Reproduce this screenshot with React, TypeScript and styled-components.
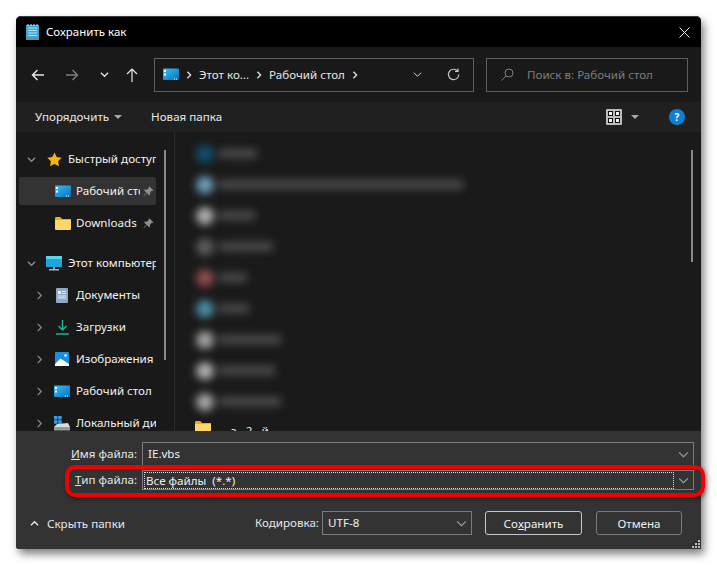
import React from "react";
import styled, { createGlobalStyle } from "styled-components";

const Global = createGlobalStyle`
  html, body { margin: 0; padding: 0; background: #fff; }
  body { font-family: "Noto Sans", "Open Sans", sans-serif; font-size: 11.6px; color: #fff; }
  #root { width: 717px; height: 565px; overflow: hidden; }
`;

const Page = styled.div`
  width: 717px;
  height: 565px;
  padding: 16px;
  box-sizing: border-box;
  background: #fff;
`;
const Win = styled.div`
  position: relative;
  width: 685px;
  height: 533px;
  display: flex;
  flex-direction: column;
  background: #191919;
  border-radius: 5px 5px 0 3px;
  box-shadow: 3px 5px 8px rgba(0, 0, 0, 0.5);
`;
const TitleBar = styled.div`
  height: 31px;
  flex: none;
  background: #000;
  border-top: 1px solid #3c3c3c;
  border-radius: 5px 5px 0 0;
  display: flex;
  align-items: center;
  padding: 0 11px 0 10px;
  gap: 7px;
  box-sizing: border-box;
`;
const Title = styled.span`
  flex: 1;
  font-size: 11.5px;
  line-height: 16px;
`;
const NavBar = styled.div`
  height: 55px;
  flex: none;
  background: #191919;
  display: flex;
  align-items: center;
  padding: 0 13px;
  box-sizing: border-box;
`;
const NavBtn = styled.div<{ $w: number; $dim?: boolean; $ml?: number }>`
  width: ${(p) => p.$w}px;
  margin-left: ${(p) => p.$ml ?? 0}px;
  display: flex;
  justify-content: center;
  color: ${(p) => (p.$dim ? "#7d7d7d" : "#e8e8e8")};
`;
const DropChev = styled(NavBtn)`
  margin-right: 6px;
`;
const Field = styled.div<{ $w: number }>`
  width: ${(p) => p.$w}px;
  height: 34px;
  box-sizing: border-box;
  border: 1px solid #5e5e5e;
  display: flex;
  align-items: center;
  flex: none;
`;
const Address = styled(Field)`
  margin-left: 3px;
  padding-left: 8px;
  gap: 6px;
`;
const Crumb = styled.span`
  color: #e6e6e6;
  line-height: 16px;
`;
const CrumbChev = styled.span`
  color: #e6e6e6;
  display: flex;
`;
const Push = styled.div`
  flex: 1;
`;
const Search = styled(Field)`
  margin-left: 12px;
  padding-left: 14px;
  gap: 13px;
  color: #7e7e7e;
`;
const CommandBar = styled.div`
  height: 30px;
  flex: none;
  background: #202020;
  display: flex;
  align-items: center;
  padding: 0 16px 0 19px;
  box-sizing: border-box;
`;
const Cmd = styled.span`
  color: #e8e8e8;
  line-height: 16px;
`;
const Caret = styled.span`
  width: 0;
  height: 0;
  border-left: 4px solid transparent;
  border-right: 4px solid transparent;
  border-top: 4px solid #a8a8a8;
  display: inline-block;
`;
const CaretGap = styled(Caret)`
  margin: 0 29px 0 5px;
`;
const ViewCaret = styled(Caret)`
  margin: 0 30px 0 9px;
`;
const Help = styled.div`
  width: 16px;
  height: 16px;
  border-radius: 50%;
  background: #0f7fd6;
  color: #fff;
  font-weight: 700;
  font-size: 10px;
  text-align: center;
  line-height: 16px;
`;
const Main = styled.div`
  flex: 1;
  min-height: 0;
  display: flex;
  overflow: hidden;
  background: #191919;
`;
const Side = styled.div`
  position: relative;
  width: 159px;
  flex: none;
  padding: 13px 0 0 3px;
  box-sizing: border-box;
  border-right: 1px solid #2c2c2c;
  overflow: hidden;
`;
const SideScroll = styled.div`
  position: absolute;
  left: 148px;
  top: 18px;
  width: 2px;
  height: 210px;
  background: #8a8a8a;
`;
const Row = styled.div<{ $sel?: boolean; $level?: number; $gapTop?: number }>`
  width: 137px;
  height: 28px;
  margin-top: ${(p) => p.$gapTop ?? 4}px;
  background: ${(p) => (p.$sel ? "#333" : "transparent")};
  border-radius: 2px;
  display: flex;
  align-items: center;
  box-sizing: border-box;
  padding-left: ${(p) => p.$level ?? 5}px;
  white-space: nowrap;
  overflow: hidden;
  flex: none;
`;
const Chev = styled.span`
  width: 14px;
  flex: none;
  display: flex;
  justify-content: center;
  color: #8c8c8c;
`;
const IconBox = styled.span<{ $w: number; $ml: number }>`
  width: ${(p) => p.$w}px;
  margin-left: ${(p) => p.$ml}px;
  flex: none;
  display: flex;
  justify-content: center;
`;
const RowText = styled.span<{ $w: number; $ml?: number }>`
  display: block;
  width: ${(p) => p.$w}px;
  margin-left: ${(p) => p.$ml ?? 5}px;
  overflow: hidden;
  color: #f2f2f2;
  line-height: 16px;
  flex: none;
`;
const Pin = styled.span`
  flex: none;
  display: flex;
  margin-left: 3px;
`;
const ListPane = styled.div`
  position: relative;
  flex: 1;
  background: #1a1a1a;
  overflow: hidden;
  padding: 6px 0 0 20px;
  box-sizing: border-box;
`;
const BlurRow = styled.div`
  height: 31px;
  display: flex;
  align-items: center;
  gap: 5px;
  filter: blur(4px);
`;
const BlurIcon = styled.div<{ $c: string }>`
  width: 18px;
  height: 18px;
  margin-left: 1px;
  border-radius: 50%;
  background: ${(p) => p.$c};
  flex: none;
`;
const BlurText = styled.div<{ $w: number }>`
  width: ${(p) => p.$w}px;
  height: 9px;
  background: #4c4c4c;
`;
const FolderRow = styled.div`
  height: 16px;
  margin-top: 4px;
  display: flex;
  align-items: flex-start;
  gap: 20px;
`;
const ClippedName = styled.span`
  color: #eee;
  line-height: 16px;
  margin-top: 2px;
  letter-spacing: 3px;
`;
const ListScroll = styled.div`
  position: absolute;
  left: 516px;
  top: 18px;
  width: 2px;
  height: 112px;
  background: #8a8a8a;
`;
const Bottom = styled.div`
  height: 118px;
  flex: none;
  background: #333;
  padding: 11px 7px 0 0;
  box-sizing: border-box;
  display: flex;
  flex-direction: column;
  border-radius: 0 0 0 3px;
`;
const FormRow = styled.div<{ $mt?: number }>`
  display: flex;
  align-items: center;
  margin-top: ${(p) => p.$mt ?? 0}px;
`;
const Label = styled.label`
  width: 126px;
  flex: none;
  text-align: right;
  padding-right: 5px;
  box-sizing: border-box;
  color: #e6e6e6;
  line-height: 16px;
`;
const Combo = styled.div<{ $h: number }>`
  flex: 1;
  height: ${(p) => p.$h}px;
  border: 1px solid #7b7b7b;
  display: flex;
  align-items: center;
  box-sizing: border-box;
  padding-left: 5px;
  color: #f0f0f0;
`;
const ComboText = styled.span`
  flex: 1;
  line-height: 16px;
`;
const FocusBox = styled.div`
  flex: 1;
  height: 17px;
  margin-left: -4px;
  border: 1px dotted #dcdcdc;
  box-sizing: border-box;
  padding-left: 1px;
  line-height: 15px;
  color: #f0f0f0;
`;
const ComboCaret = styled.span`
  width: 19px;
  flex: none;
  display: flex;
  justify-content: center;
  color: #a0a0a0;
`;
const FootRow = styled.div`
  display: flex;
  align-items: center;
  margin-top: 21px;
  padding-left: 14px;
`;
const HideBtn = styled.div`
  display: flex;
  align-items: center;
  gap: 8px;
  color: #e6e6e6;
  width: 225px;
  flex: none;
`;
const EncLabel = styled.span`
  width: 67px;
  flex: none;
  color: #e6e6e6;
  line-height: 16px;
`;
const EncCombo = styled(Combo)`
  flex: none;
  width: 150px;
`;
const Btn = styled.div<{ $w: number; $def?: boolean; $ml: number }>`
  width: ${(p) => p.$w}px;
  margin-left: ${(p) => p.$ml}px;
  height: 24px;
  box-sizing: border-box;
  border: 1px solid ${(p) => (p.$def ? "#c8c8c8" : "#7b7b7b")};
  border-radius: 3px;
  display: flex;
  align-items: center;
  justify-content: center;
  color: #f0f0f0;
  flex: none;
`;
const Highlight = styled.div`
  position: absolute;
  left: 49px;
  top: 449px;
  width: 640px;
  height: 32px;
  border: 4px solid #f00000;
  border-radius: 10px;
  box-sizing: border-box;
  box-shadow: 1px 2px 4px rgba(0, 0, 0, 0.5);
  pointer-events: none;
`;
const Grip = styled.svg`
  position: absolute;
  right: 1px;
  bottom: 1px;
`;
const U = styled.span`
  text-decoration: underline;
`;

const Chevron = ({ dir = "down", size = 9, w = 1.4 }: { dir?: "down" | "right" | "up"; size?: number; w?: number }) => {
  const d = dir === "down" ? "M1 3l4 4 4-4" : dir === "up" ? "M1 7l4-4 4 4" : "M3 1l4 4-4 4";
  return (
    <svg width={size} height={size} viewBox="0 0 10 10" fill="none" stroke="currentColor" strokeWidth={w}>
      <path d={d} />
    </svg>
  );
};
const DesktopIcon = ({ w = 16, h = 13 }: { w?: number; h?: number }) => (
  <svg width={w} height={h} viewBox="0 0 16 12">
    <defs>
      <linearGradient id="dk" x1="0" y1="0" x2="1" y2="1">
        <stop offset="0" stopColor="#35c2ee" />
        <stop offset="1" stopColor="#0a6fc0" />
      </linearGradient>
    </defs>
    <rect width="16" height="11.5" rx="1" fill="url(#dk)" />
    <rect x="1" y="1.5" width="2" height="2" fill="#fff" />
    <rect x="1" y="5" width="2" height="2" fill="#fff" />
    <rect x="11" y="10" width="1" height="1" fill="#fff" />
    <rect x="13" y="10" width="1" height="1" fill="#fff" />
  </svg>
);
const PinIcon = () => (
  <svg width="11" height="11" viewBox="0 0 11 11">
    <path d="M6.5.5l4 4-1 .6-.8-.3L6.8 7l.2 1.800-.8.7-2.300-2.400L1 10 .6 9.600l2.900-2.900L1.100 4.400l.7-.8 1.800.2 2.200-1.900-.2-.8z" fill="#8d8d8d" />
  </svg>
);
const Folder = () => (
  <svg width="16" height="13" viewBox="0 0 16 13">
    <path d="M0 1.500C0 .7.500 0 1.200 0h4l2 2H16v2H0z" fill="#f0aa14" />
    <path d="M0 3h16v9a1 1 0 0 1-1 1H1a1 1 0 0 1-1-1z" fill="#ffd768" />
  </svg>
);
const Row2 = ({ icon, w, ml, text, tw, tml }: { icon: React.ReactNode; w: number; ml: number; text: string; tw: number; tml?: number }) => (
  <Row $level={13}>
    <Chev><Chevron dir="right" /></Chev>
    <IconBox $w={w} $ml={ml}>{icon}</IconBox>
    <RowText $w={tw} $ml={tml}>{text}</RowText>
  </Row>
);

const blurred: [string, number][] = [
  ["#12506e", 38],
  ["#6d9fba", 244],
  ["#b0b0b0", 36],
  ["#5c5c5c", 54],
  ["#8e4d4a", 28],
  ["#4f8ea8", 30],
  ["#a3a3a3", 62],
  ["#b0b0b0", 56],
  ["#a6a6a6", 62],
];

export default function App() {
  return (
    <Page>
      <Global />
      <Win>
        <TitleBar>
          <svg width="13" height="16" viewBox="0 0 13 16">
            <rect y="1" width="13" height="14" fill="#35a6d8" />
            <rect y="14.500" width="13" height="1.500" fill="#c9713a" />
            <path d="M2 4h9M2 6.500h9M2 9h9M2 11.500h9" stroke="#bfe6f6" strokeWidth="1" />
            <path d="M2 0v2M5 0v2M8 0v2M11 0v2" stroke="#d8eef8" strokeWidth="1" />
          </svg>
          <Title>Сохранить как</Title>
          <svg width="11" height="11" viewBox="0 0 11 11" stroke="#f0f0f0" strokeWidth="1" fill="none">
            <path d="M.5.500l10 10M10.500.500l-10 10" />
          </svg>
        </TitleBar>
        <NavBar>
          <NavBtn $w={18}>
            <svg width="14" height="12" viewBox="0 0 14 12" fill="none" stroke="currentColor" strokeWidth="1.400"><path d="M13 6H1.500M6.500 1l-5 5 5 5" /></svg>
          </NavBtn>
          <NavBtn $w={18} $ml={16} $dim>
            <svg width="14" height="12" viewBox="0 0 14 12" fill="none" stroke="currentColor" strokeWidth="1.400"><path d="M1 6h11.500M7.500 1l5 5-5 5" /></svg>
          </NavBtn>
          <NavBtn $w={18} $ml={14}><Chevron /></NavBtn>
          <NavBtn $w={38}>
            <svg width="12" height="14" viewBox="0 0 12 14" fill="none" stroke="currentColor" strokeWidth="1.200"><path d="M6 14V1M1 6l5-5 5 5" /></svg>
          </NavBtn>
          <Address $w={320}>
            <DesktopIcon />
            <CrumbChev><Chevron dir="right" size={8} w={1.6} /></CrumbChev>
            <Crumb>Этот ко...</Crumb>
            <CrumbChev><Chevron dir="right" size={8} w={1.6} /></CrumbChev>
            <Crumb>Рабочий стол</Crumb>
            <CrumbChev><Chevron dir="right" size={8} w={1.6} /></CrumbChev>
            <Push />
            <DropChev $w={9}><Chevron size={9} w={1} /></DropChev>
            <NavBtn $w={39}>
              <svg width="13" height="13" viewBox="0 0 13 13" fill="none" stroke="#c8c8c8" strokeWidth="1.200"><path d="M10.500 3A5.200 5.200 0 1 0 11.800 6.500M11 .5v3H8" /></svg>
            </NavBtn>
          </Address>
          <Search $w={202}>
            <svg width="13" height="13" viewBox="0 0 13 13" fill="none" stroke="#7e7e7e" strokeWidth="1"><circle cx="8" cy="5" r="4" /><path d="M5 8l-4.500 4.500" /></svg>
            <span>Поиск в: Рабочий стол</span>
          </Search>
        </NavBar>
        <CommandBar>
          <Cmd>Упорядочить</Cmd>
          <CaretGap />
          <Cmd>Новая папка</Cmd>
          <Push />
          <svg width="16" height="16" viewBox="0 0 16 16">
            <rect width="16" height="16" rx="1" fill="#bdbdbd" />
            <rect x="2.500" y="2.500" width="4" height="4" fill="#f2f2f2" stroke="#111" />
            <rect x="9.500" y="2.500" width="4" height="4" fill="#f2f2f2" stroke="#111" />
            <rect x="2.500" y="9.500" width="4" height="4" fill="#f2f2f2" stroke="#111" />
            <rect x="9.500" y="9.500" width="4" height="4" fill="#f2f2f2" stroke="#111" />
          </svg>
          <ViewCaret />
          <Help>?</Help>
        </CommandBar>
        <Main>
          <Side>
            <Row $gapTop={0}>
              <Chev><Chevron /></Chev>
              <IconBox $w={16} $ml={8}>
                <svg width="15" height="15" viewBox="0 0 15 15"><path d="M7.500.500l2.200 4.600 5 .7-3.600 3.500.9 5-4.500-2.400L3 14.300l.9-5L.300 5.800l5-.7z" fill="#f5b50f" /></svg>
              </IconBox>
              <RowText $w={88} $ml={6}>Быстрый доступ</RowText>
            </Row>
            <Row $sel $level={36}>
              <DesktopIcon />
              <RowText $w={64}>Рабочий стол</RowText>
              <Pin><PinIcon /></Pin>
            </Row>
            <Row $level={36}>
              <Folder />
              <RowText $w={64}>Downloads</RowText>
              <Pin><PinIcon /></Pin>
            </Row>
            <Row $gapTop={12}>
              <Chev><Chevron /></Chev>
              <IconBox $w={16} $ml={8}>
                <svg width="16" height="15" viewBox="0 0 16 15">
                  <rect width="16" height="11" fill="#1fa6d8" />
                  <rect y="0" width="16" height="3" fill="#5cd4ee" />
                  <rect x="7" y="11" width="2" height="2" fill="#9a9a9a" />
                  <rect x="3" y="13" width="10" height="1.500" fill="#b4b4b4" />
                </svg>
              </IconBox>
              <RowText $w={88} $ml={6}>Этот компьютер</RowText>
            </Row>
            <Row2 w={14} ml={9} text="Документы" tw={70} tml={7} icon={
              <svg width="12" height="15" viewBox="0 0 12 15">
                <rect width="12" height="15" rx="1" fill="#8fa9c4" />
                <rect x="2" y="3" width="3" height="3" fill="#e8eef5" />
                <path d="M6 3.500h4M6 5.500h4M2 8h8M2 10h8" stroke="#e8eef5" strokeWidth="1" />
              </svg>
            } />
            <Row2 w={14} ml={9} text="Загрузки" tw={70} tml={7} icon={
              <svg width="13" height="15" viewBox="0 0 13 15" fill="none" stroke="#19b393" strokeWidth="1.500">
                <path d="M6.500 0v10M2.500 6l4 4 4-4M0 14h13" />
              </svg>
            } />
            <Row2 w={14} ml={9} text="Изображения" tw={82} tml={7} icon={
              <svg width="14" height="14" viewBox="0 0 14 14">
                <rect width="14" height="14" rx="1" fill="#1a8fdc" />
                <path d="M0 12l5.500-5.500L14 12v2H0z" fill="#fff" />
                <circle cx="10.500" cy="3.500" r="1.300" fill="#fff" />
              </svg>
            } />
            <Row2 w={16} ml={8} text="Рабочий стол" tw={82} tml={6} icon={<DesktopIcon />} />
            <Row2 w={16} ml={8} text="Локальный диск (C:)" tw={80} tml={6} icon={
              <svg width="16" height="15" viewBox="0 0 16 15">
                <rect width="3.500" height="3.500" fill="#3a9ee6" />
                <rect x="4.200" width="3.500" height="3.500" fill="#3a9ee6" />
                <rect y="4.200" width="3.500" height="3.500" fill="#3a9ee6" />
                <rect x="4.200" y="4.200" width="3.500" height="3.500" fill="#3a9ee6" />
                <path d="M3 8l11-1 2 4H0z" fill="#dcdcdc" />
                <rect y="11" width="16" height="3.500" fill="#9a9a9a" />
                <rect x="3" y="12" width="2" height="1.200" fill="#35d05c" />
              </svg>
            } />
            <SideScroll />
          </Side>
          <ListPane>
            {blurred.map(([c, w], i) => (
              <BlurRow key={i}>
                <BlurIcon $c={c} />
                <BlurText $w={w} />
              </BlurRow>
            ))}
            <FolderRow>
              <Folder />
              <ClippedName>э 2 й</ClippedName>
            </FolderRow>
            <ListScroll />
          </ListPane>
        </Main>
        <Bottom>
          <FormRow>
            <Label><U>И</U>мя файла:</Label>
            <Combo $h={24}>
              <ComboText>IE.vbs</ComboText>
              <ComboCaret><Chevron size={11} w={1} /></ComboCaret>
            </Combo>
          </FormRow>
          <FormRow $mt={4}>
            <Label><U>Т</U>ип файла:</Label>
            <Combo $h={20}>
              <FocusBox>Все файлы&nbsp; (*.*)</FocusBox>
              <ComboCaret><Chevron size={11} w={1} /></ComboCaret>
            </Combo>
          </FormRow>
          <FootRow>
            <HideBtn><Chevron dir="up" size={9} w={1.6} /><span>Скрыть папки</span></HideBtn>
            <EncLabel>Кодировка:</EncLabel>
            <EncCombo $h={24}>
              <ComboText>UTF-8</ComboText>
              <ComboCaret><Chevron size={11} w={1} /></ComboCaret>
            </EncCombo>
            <Btn $w={97} $ml={13} $def>Со<U>х</U>ранить</Btn>
            <Btn $w={86} $ml={14}>Отмена</Btn>
          </FootRow>
        </Bottom>
        <Highlight />
        <Grip width="8" height="8" viewBox="0 0 8 8" fill="#bcbcbc">
          <rect x="6" y="0" width="2" height="2" />
          <rect x="3" y="3" width="2" height="2" />
          <rect x="6" y="3" width="2" height="2" />
          <rect x="0" y="6" width="2" height="2" />
          <rect x="3" y="6" width="2" height="2" />
          <rect x="6" y="6" width="2" height="2" />
        </Grip>
      </Win>
    </Page>
  );
}
